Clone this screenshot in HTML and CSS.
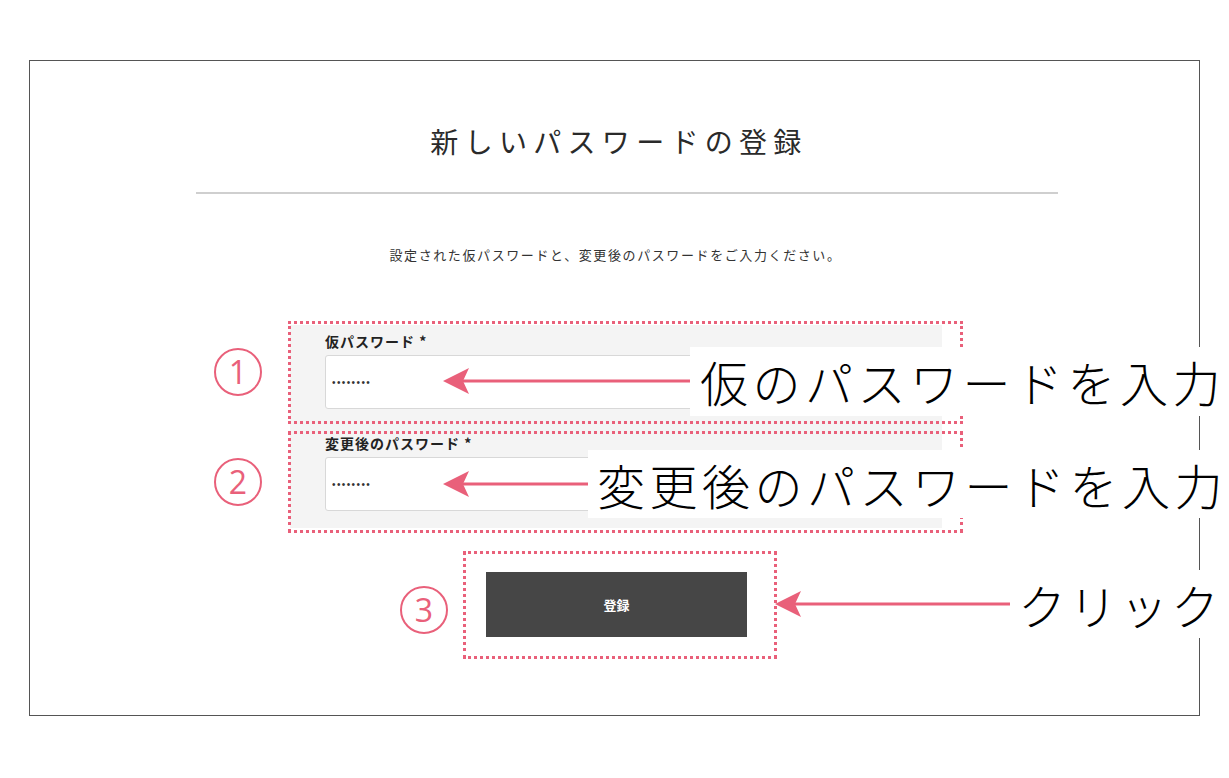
FILE: index.html
```html
<!DOCTYPE html>
<html lang="ja">
<head>
<meta charset="utf-8">
<title>新しいパスワードの登録</title>
<link rel="stylesheet" href="styles.css">
</head>
<body>
<div class="page">
  <div class="frame">
    <h1 class="title">新しいパスワードの登録</h1>
    <div class="rule"></div>
    <p class="lead">設定された仮パスワードと、変更後のパスワードをご入力ください。</p>
    <form class="panel">
      <div class="field">
        <label class="field-label">仮パスワード *</label>
        <input class="field-input" type="password" value="12345678">
      </div>
      <div class="field field-second">
        <label class="field-label">変更後のパスワード *</label>
        <input class="field-input" type="password" value="12345678">
      </div>
    </form>
    <button class="submit" type="button">登録</button>
  </div>

  <div class="mark mark-1"></div>
  <div class="mark mark-2"></div>
  <div class="mark mark-3"></div>

  <div class="num num-1">1</div>
  <div class="num num-2">2</div>
  <div class="num num-3">3</div>

  <svg class="arrow arrow-1" width="247" height="30" viewBox="0 0 247 30"><line x1="20" y1="15" x2="247" y2="15" class="arrow-line"/><polygon points="0,15 26,2 20,15 26,28" class="arrow-head"/></svg>
  <svg class="arrow arrow-2" width="147" height="30" viewBox="0 0 147 30"><line x1="20" y1="15" x2="147" y2="15" class="arrow-line"/><polygon points="0,15 26,2 20,15 26,28" class="arrow-head"/></svg>
  <svg class="arrow arrow-3" width="235" height="30" viewBox="0 0 235 30"><line x1="20" y1="15" x2="235" y2="15" class="arrow-line"/><polygon points="0,15 26,2 20,15 26,28" class="arrow-head"/></svg>

  <div class="callout callout-1">仮のパスワードを入力</div>
  <div class="callout callout-2">変更後のパスワードを入力</div>
  <div class="callout callout-3">クリック</div>
</div>
</body>
</html>
```

FILE: styles.css
```css
html, body {
  margin: 0;
  padding: 0;
  background: #fff;
}

body {
  font-family: "Noto Sans CJK JP", "Noto Sans", sans-serif;
  color: #333;
}

.page {
  position: relative;
  width: 1229px;
  height: 778px;
  box-sizing: border-box;
  padding: 60px 0 0 29px;
  overflow: hidden;
}

.frame {
  width: 1171px;
  height: 656px;
  box-sizing: border-box;
  border: 1px solid #555;
}

.title {
  margin: 0;
  padding: 60px 0 0 9px;
  line-height: 40px;
  font-size: 28px;
  font-weight: 400;
  letter-spacing: 6.3px;
  text-align: center;
  color: #2a2a2a;
}

.rule {
  margin: 31px 0 0 166px;
  width: 862px;
  height: 2px;
  background: #cfcfcf;
}

.lead {
  margin: 51px 0 0;
  padding-left: 2px;
  line-height: 20px;
  font-size: 13px;
  letter-spacing: 1.6px;
  text-align: center;
  color: #333;
}

.panel {
  margin: 60px 0 0 260px;
  width: 652px;
  box-sizing: border-box;
  padding: 8px 35px 17px;
  background: #f4f4f4;
}

.field {
  display: flex;
  flex-direction: column;
}

.field-second {
  margin-top: 26px;
}

.field-label {
  display: block;
  line-height: 16px;
  font-size: 14px;
  font-weight: 700;
  letter-spacing: 1px;
  color: #222;
  margin-bottom: 6px;
}

.field-input {
  display: block;
  width: 100%;
  height: 54px;
  box-sizing: border-box;
  border: 1px solid #d8d8d8;
  border-radius: 3px;
  background: #fff;
  padding: 0 6px;
  font-family: "Liberation Sans", sans-serif;
  font-size: 10px;
  letter-spacing: 1.4px;
  color: #333;
  outline: none;
}

.submit {
  display: block;
  margin: 44px 0 0 456px;
  width: 261px;
  height: 65px;
  border: none;
  background: #464646;
  color: #fff;
  font-family: "Noto Sans CJK JP", sans-serif;
  font-size: 13px;
  font-weight: 700;
  padding: 0;
}

/* annotations overlaid on the screenshot */
.mark {
  position: absolute;
  box-sizing: border-box;
  border: 3px dotted #e9607a;
}

.mark-1 { left: 288px; top: 321px; width: 675px; height: 103px; }
.mark-2 { left: 288px; top: 431px; width: 675px; height: 102px; }
.mark-3 { left: 463px; top: 551px; width: 314px; height: 108px; }

.num {
  position: absolute;
  width: 48px;
  height: 48px;
  box-sizing: border-box;
  border: 2px solid #e9607a;
  border-radius: 50%;
  display: flex;
  align-items: center;
  justify-content: center;
  font-family: "Open Sans", sans-serif;
  font-size: 32px;
  line-height: 1;
  color: #e9607a;
}

.num-1 { left: 214px; top: 348px; }
.num-2 { left: 214px; top: 458px; }
.num-3 { left: 400px; top: 586px; }

.arrow {
  position: absolute;
  display: block;
}

.arrow-line {
  stroke: #e9607a;
  stroke-width: 3;
}

.arrow-head {
  fill: #e9607a;
}

.arrow-1 { left: 443px; top: 366px; }
.arrow-2 { left: 443px; top: 469px; }
.arrow-3 { left: 775px; top: 589px; }

.callout {
  position: absolute;
  right: 0;
  background: #fff;
  font-family: "Noto Sans CJK JP", sans-serif;
  font-size: 48px;
  font-weight: 300;
  letter-spacing: 4.5px;
  color: #000;
  white-space: nowrap;
}

.callout-1 { left: 690px; top: 347px; height: 69px; line-height: 69px; padding-left: 10px; }
.callout-2 { left: 588px; top: 450px; height: 68px; line-height: 68px; padding-left: 9px; }
.callout-3 { left: 1010px; top: 570px; height: 68px; line-height: 68px; padding-left: 8px; letter-spacing: 3px; }
```
